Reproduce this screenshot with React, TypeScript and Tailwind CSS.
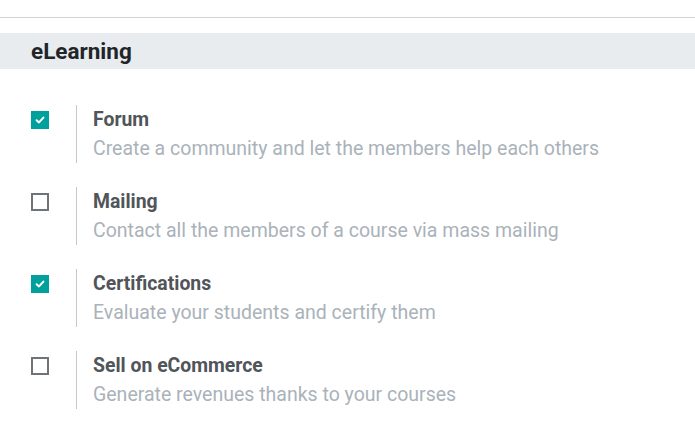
import React from "react";

type Item = { title: string; desc: string; checked: boolean };

const items: Item[] = [
  { title: "Forum", desc: "Create a community and let the members help each others", checked: true },
  { title: "Mailing", desc: "Contact all the members of a course via mass mailing", checked: false },
  { title: "Certifications", desc: "Evaluate your students and certify them", checked: true },
  { title: "Sell on eCommerce", desc: "Generate revenues thanks to your courses", checked: false },
];

function Check({ checked }: { checked: boolean }) {
  if (checked) {
    return (
      <div className="w-[18px] h-[18px] bg-[#00a09d] flex items-center justify-center">
        <svg width="10" height="10" viewBox="0 0 10 10">
          <path d="M1.6 5.2 L4 7.4 L8.4 2.6" fill="none" stroke="white" strokeWidth="2" strokeLinecap="round" strokeLinejoin="round" />
        </svg>
      </div>
    );
  }
  return <div className="w-[18px] h-[18px] border-2 border-[#6f7479] bg-white" />;
}

export default function App() {
  return (
    <div className="w-[695px] h-[437px] bg-white overflow-hidden" style={{ fontFamily: "Roboto, 'Liberation Sans', sans-serif" }}>
      <div className="h-[17px]" />
      <div className="h-px bg-[#d3d3d3]" />
      <div className="h-[15px]" />
      <div className="h-[36px] bg-[#e9ecef] flex items-center pl-[31px]">
        <span className="text-[22.5px] font-bold text-[#212529] leading-none">eLearning</span>
      </div>
      <div className="pt-[36px] flex flex-col gap-[24px]">
        {items.map((it) => (
          <div key={it.title} className="flex pl-[31px]">
            <div className="w-[45px] pt-[6px]">
              <Check checked={it.checked} />
            </div>
            <div className="border-l border-[#c8c8c8] pl-[16px] h-[58px]">
              <div className="text-[19.4px] font-bold text-[#50555a] leading-[29px]">{it.title}</div>
              <div className="text-[19.5px] text-[#aab2ba] leading-[29px]">{it.desc}</div>
            </div>
          </div>
        ))}
      </div>
    </div>
  );
}
